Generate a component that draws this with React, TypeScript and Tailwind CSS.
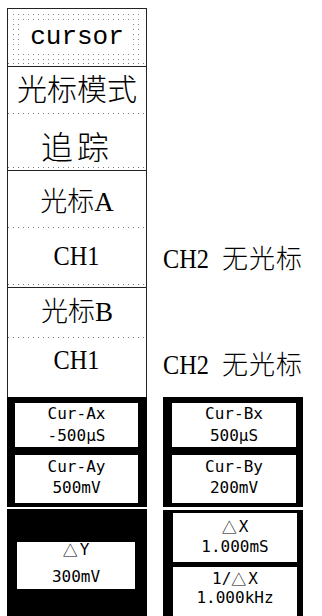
const serif = "font-['Liberation_Serif','Noto_Sans_CJK_SC',serif]";
const mono = "font-['DejaVu_Sans_Mono','Liberation_Mono',monospace]";

function DotLine() {
  return <div className="h-px bg-[linear-gradient(to_right,#777_1px,transparent_1px)] bg-[length:5px_1px]" />;
}

function SectionEnd() {
  return (
    <div>
      <DotLine />
      <div className="h-[2px]" />
      <div className="h-px bg-[#222]" />
    </div>
  );
}

function Row({ children, right }: { children: React.ReactNode; right?: React.ReactNode }) {
  return (
    <div className="flex items-stretch">
      <div className="ml-[7px] w-[140px] shrink-0 border-x border-[#222]">{children}</div>
      {right && <div className="flex-1 flex items-center pl-[16px]">{right}</div>}
    </div>
  );
}

function Ch2Off() {
  return (
    <div className={`flex items-center gap-[13px] text-[27px] text-black font-light ${serif}`}>
      <span className="inline-block scale-x-90 origin-left -mr-[5px]">CH2</span>
      <span className="text-[26px] tracking-[1px]">无光标</span>
    </div>
  );
}

function Delta() {
  return <span className="font-['Noto_Sans_CJK_SC',sans-serif] text-[15px] mr-[2px]">△</span>;
}

function Box({ lines, h, cls }: { lines: React.ReactNode[]; h: string; cls: string }) {
  return (
    <div className={`bg-white ${h} flex flex-col items-center text-[16px] text-black ${mono} ${cls}`}>
      {lines.map((l, i) => (
        <span key={i} className="flex items-center">{l}</span>
      ))}
    </div>
  );
}

export default function App() {
  return (
    <div className="w-[322px] h-[616px] overflow-hidden bg-white">
      <div className="pt-[8px]">
        {/* cursor title */}
        <Row>
          <div className="border-t border-[#222]">
            <div className="h-[54px] p-[3px]">
              <div className="h-full bg-[radial-gradient(circle,#888_0.7px,transparent_1px)] bg-[length:5px_5px] px-[10px] pt-[9px] pb-[6px] flex">
                <span className="flex-1 bg-white flex items-center justify-center text-[26px] text-black font-['Liberation_Mono',monospace]">
                  cursor
                </span>
              </div>
            </div>
            <SectionEnd />
          </div>
        </Row>
        {/* mode */}
        <Row>
          <div className={`h-[46px] flex items-center justify-center text-[30px] leading-none text-black font-light ${serif}`}>光标模式</div>
          <DotLine />
          <div className={`h-[53px] flex items-center justify-center pt-[14px] text-[32px] tracking-[4px] leading-none text-black font-light ${serif}`}>
            追踪
          </div>
          <SectionEnd />
        </Row>
        {/* cursor A */}
        <Row>
          <div className={`h-[56px] flex items-center justify-center pt-[6px] text-[27px] leading-none text-black font-light ${serif}`}>光标A</div>
          <DotLine />
        </Row>
        <Row right={<div className="pt-[2px]"><Ch2Off /></div>}>
          <div className={`h-[56px] flex items-center justify-center text-[27px] leading-none text-black ${serif}`}>
            <span className="inline-block scale-x-90">CH1</span>
          </div>
          <SectionEnd />
        </Row>
        {/* cursor B */}
        <Row>
          <div className={`h-[49px] flex items-center justify-center text-[27px] leading-none text-black font-light ${serif}`}>光标B</div>
          <DotLine />
        </Row>
        <Row right={<div className="pb-[4px]"><Ch2Off /></div>}>
          <div className={`h-[59px] flex items-center justify-center pb-[14px] text-[27px] leading-none text-black ${serif}`}>
            <span className="inline-block scale-x-90">CH1</span>
          </div>
        </Row>
      </div>

      {/* readouts */}
      <div className="flex">
        <div className="ml-[7px] w-[140px] h-[219px] bg-black flex flex-col">
          <div className="pl-[8px] pr-[9px] pt-[6px] pb-[4px] flex flex-col gap-[8px]">
            <Box lines={["Cur-Ax", "-500μS"]} h="h-[44px]" cls="leading-[22px]" />
            <Box lines={["Cur-Ay", "500mV"]} h="h-[48px]" cls="leading-[21px] pt-[1px]" />
          </div>
          <div className="h-[2px] bg-white" />
          <div className="pl-[10px] pr-[12px] pt-[33px]">
            <Box lines={[<><Delta />Y</>, "300mV"]} h="h-[47px]" cls="leading-[16px] gap-[11px]" />
          </div>
        </div>
        <div className="ml-[16px] w-[140px] flex flex-col gap-[3px]">
          <div className="bg-black pl-[9px] pr-[7px] pt-[6px] pb-[4px] flex flex-col gap-[8px]">
            <Box lines={["Cur-Bx", "500μS"]} h="h-[44px]" cls="leading-[22px]" />
            <Box lines={["Cur-By", "200mV"]} h="h-[48px]" cls="leading-[21px] pt-[1px]" />
          </div>
          <div className="bg-black pl-[10px] pr-[6px] pt-[3px] flex flex-col gap-[5px] h-[120px]">
            <Box lines={[<><Delta />X</>, "1.000mS"]} h="h-[49px]" cls="leading-[20px] pt-[4px]" />
            <Box lines={[<>1/<Delta />X</>, "1.000kHz"]} h="h-[55px]" cls="leading-[19px] pt-[2px]" />
          </div>
        </div>
      </div>
    </div>
  );
}
